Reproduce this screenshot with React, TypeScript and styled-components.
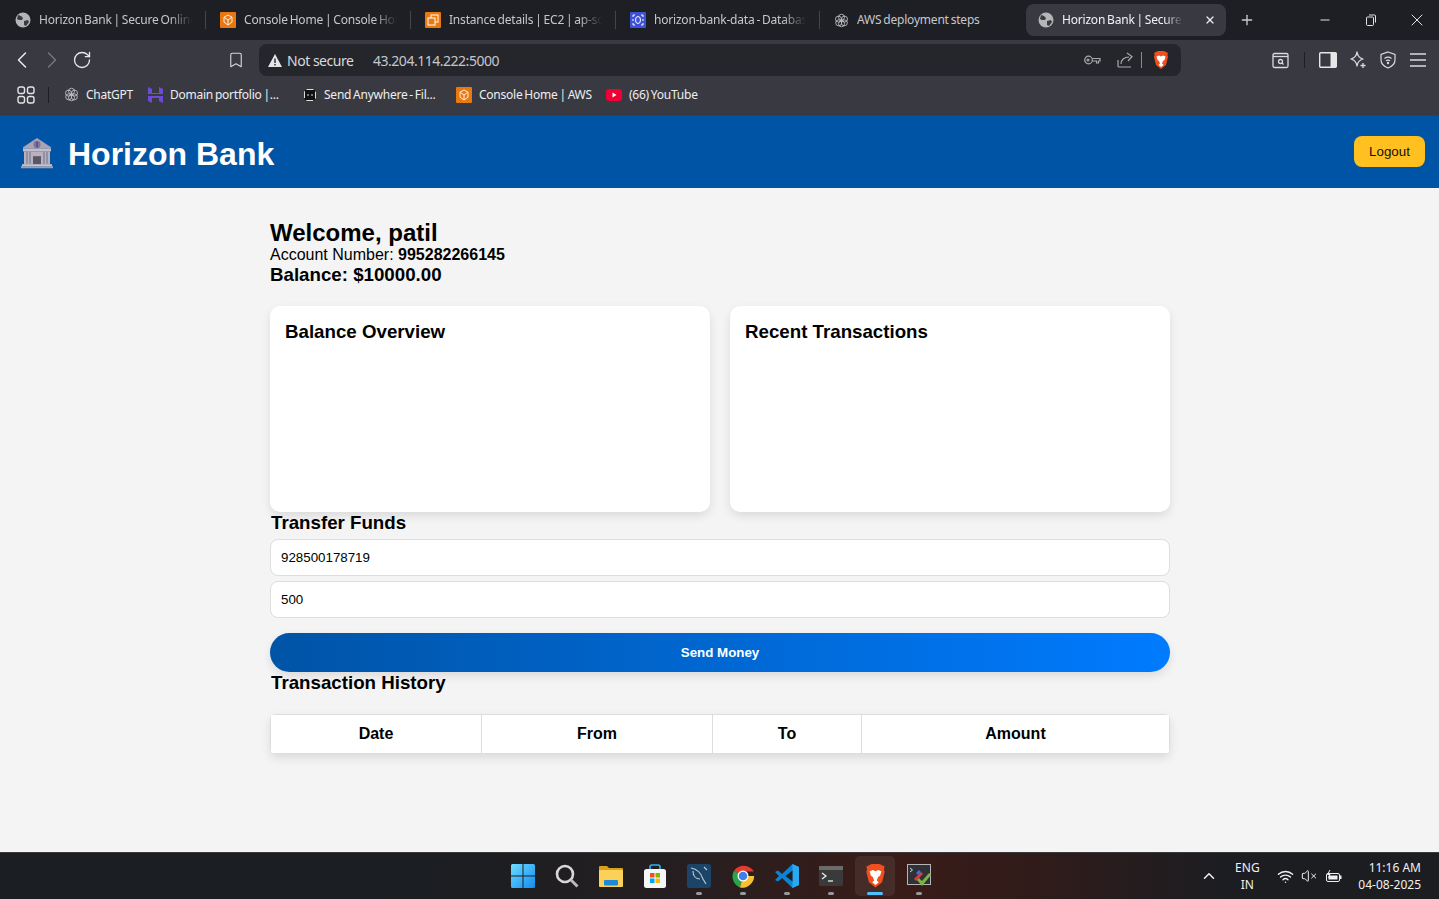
import React from "react";
import styled, { createGlobalStyle } from "styled-components";
import { ChevronLeft, ChevronRight, RotateCw, Bookmark, Minus, X, Plus, ChevronUp, Wifi, VolumeX } from "lucide-react";

const Global = createGlobalStyle`
  html, body { margin: 0; padding: 0; height: 100%; overflow: hidden; }
  body { font-family: "Liberation Sans", Arial, sans-serif; background: #f4f4f4; color: #000; }
  * { box-sizing: border-box; }
  h1, h2, h3, p { margin: 0; }
`;

const Screen = styled.div`width: 1439px; height: 899px; display: flex; flex-direction: column; overflow: hidden;`;

const TabStrip = styled.div`height: 40px; background: #1e1f25; display: flex; align-items: flex-start; font-family: "Noto Sans", sans-serif; font-size: 12px; color: #c6c7cc; padding-top: 4px;`;
const Tab = styled.div<{ $w: number; $active?: boolean; $sep?: boolean }>`
  width: ${p => p.$w}px; height: 32px; flex: none; display: flex; align-items: center; gap: 8px;
  padding: 0 0 0 ${p => (p.$active ? 12 : 15)}px; position: relative;
  ${p => p.$active ? "background:#393a41;border-radius:8px;color:#f2f2f4;" : ""}
  ${p => p.$sep ? "&::after{content:'';position:absolute;right:-1px;top:7px;height:18px;width:1px;background:#44454b;}" : ""}
`;
const TabLabel = styled.span<{ $fade?: boolean }>`
  flex: 1; min-width: 0; white-space: nowrap; overflow: hidden; letter-spacing: -0.2px; word-spacing: -1px; margin-right: 13px; padding-bottom: 1px;
  ${p => p.$fade ? "mask-image: linear-gradient(to right,#000 85%,transparent 100%);" : ""}
`;
const TabClose = styled.span`display: flex; margin-right: 10px; color: #eee;`;
const NewTab = styled.span`display: flex; width: 42px; height: 32px; align-items: center; justify-content: center; color: #c9cacf;`;
const WindowButtons = styled.div`margin-left: auto; margin-right: -1px; display: flex; height: 32px; align-items: center; color: #e4e4e6;`;
const WinBtn = styled.span`width: 46px; display: flex; justify-content: center; align-items: center;`;

const Toolbar = styled.div`height: 38px; background: #393a41; display: flex; align-items: center; padding: 2px 0 0 7px; position: relative; z-index: 1;`;
const NavBtn = styled.span<{ $dim?: boolean }>`width: 30px; display: flex; justify-content: center; color: ${p => (p.$dim ? "#74757b" : "#e8e8ea")};`;
const BookmarkBtn = styled.span`margin-left: 129px; width: 20px; display: flex; justify-content: center; color: #d5d6d9;`;
const UrlBar = styled.div`
  margin-left: 13px; width: 922px; height: 32px; background: #25262c; border-radius: 8px; display: flex; align-items: center; padding: 0 12px 0 9px;
  font-family: "Noto Sans", sans-serif; font-size: 14px; color: #d9d9dc; letter-spacing: -0.48px;
`;
const NotSecure = styled.span`margin-left: 5px; width: 86px;`;
const Address = styled.span`color: #c6c7cb; flex: 1;`;
const UrlIcon = styled.span`display: flex; color: #a9aaae; margin-right: 16px;`;
const UrlSep = styled.span`width: 1px; height: 16px; background: #8b8c90; margin: 0 11px 0 -9px;`;
const RightTools = styled.div`margin-left: 83px; display: flex; align-items: center; color: #d9dadc; gap: 0;`;
const ToolBtn = styled.span<{ $w?: number }>`width: ${p => p.$w ?? 30}px; display: flex; justify-content: center;`;
const ToolSep = styled.span`width: 1px; height: 16px; background: #1e1f25; margin: 0 8px;`;

const Bookmarks = styled.div`height: 37px; background: #393a41; display: flex; align-items: center; padding-left: 17px; font-family: "Noto Sans", sans-serif; font-size: 12px; color: #eeeef0; letter-spacing: -0.24px; word-spacing: -1px; padding-bottom: 4px;`;
const BmSep = styled.span`width: 1px; height: 16px; background: #1e1f25; margin: 0 15px 0 13px;`;
const BmItem = styled.span<{ $w: number }>`width: ${p => p.$w}px; flex: none; display: flex; align-items: center; gap: 7px; white-space: nowrap;`;

const Header = styled.header`height: 73px; background: #0054a6; display: flex; align-items: center; justify-content: space-between; padding: 0 14px 0 20px; border-top: 1px solid #0a4a8c;`;
const Brand = styled.h1`display: flex; align-items: center; gap: 14px; color: #fff; font-size: 32px; font-weight: 700; line-height: 37px; margin-top: 4px;`;
const BankSvg = styled.svg`margin-top: -2px;`;
const Logout = styled.button`
  width: 71px; height: 31px; margin-bottom: 2px; border: 0; border-radius: 8px; background: #ffc020; color: #111;
  font: 13.333px "Liberation Sans", sans-serif; padding: 0;
`;

const Main = styled.main`flex: 1; width: 900px; margin-left: 270px; padding-top: 31px; position: relative;`;
const Welcome = styled.h2`font-size: 24px; line-height: 27px; font-weight: 700;`;
const Account = styled.p`font-size: 16px; line-height: 18px; b { font-weight: 700; }`;
const Balance = styled.p`font-size: 18.72px; line-height: 22px; font-weight: 700; margin-bottom: 20px;`;
const Cards = styled.div`display: grid; grid-template-columns: 440px 440px; gap: 20px;`;
const Card = styled.section`height: 206px; background: #fff; border-radius: 10px; padding: 15px; box-shadow: 0 4px 10px rgba(0,0,0,.1);`;
const CardTitle = styled.h3`font-size: 18.72px; line-height: 22px; font-weight: 700;`;
const SectionTitle = styled.h3`font-size: 18.72px; line-height: 22px; font-weight: 700; padding-left: 1px;`;
const Field = styled.input`
  display: block; width: 100%; height: 37px; margin: 0 0 5px; padding: 0 10px; background: #fff; border: 1px solid #ddd; border-radius: 8px;
  font: 13.333px "Liberation Sans", sans-serif; color: #000; outline: none;
`;
const TransferTitle = styled(SectionTitle)`margin-bottom: 5px;`;
const SendBtn = styled.button`
  display: block; width: 100%; height: 39px; margin-top: 15px; border: 0; border-radius: 25px; color: #fff;
  background: linear-gradient(90deg, #0054a6, #007bff); font: 700 13.333px "Liberation Sans", sans-serif; box-shadow: 0 4px 10px rgba(0,0,0,.1);
`;
const HistoryTitle = styled(SectionTitle)``;
const Table = styled.table`
  width: 899px; margin-top: 20px; table-layout: fixed; border-collapse: collapse; background: #fff; border-radius: 5px; overflow: hidden; box-shadow: 0 4px 10px rgba(0,0,0,.1);
`;
const Th = styled.th<{ $w: number }>`
  width: ${p => p.$w}px; height: 39px; padding: 0; font-size: 16px; font-weight: 700; text-align: center; border: 1px solid #ddd;
`;

const Taskbar = styled.footer`
  height: 47px; display: flex; align-items: center; position: relative; border-top: 1px solid #3a3a3c;
  background: linear-gradient(90deg, #1b1e23 0%, #1c1e22 32%, #261e20 48%, #3a1c18 62%, #301b1a 72%, #1c1d22 85%, #1b1d21 100%);
  color: #f1f1f1; font-family: "Noto Sans", sans-serif; font-size: 12px;
`;
const TaskIcons = styled.div`display: flex; margin-left: 501px; width: 440px;`;
const TaskIcon = styled.span<{ $active?: boolean; $dot?: "run" | "active" }>`
  width: ${p => (p.$active ? 40 : 44)}px; ${p => (p.$active ? "margin: 0 2px;" : "")} height: 40px; display: flex; align-items: center; justify-content: center; position: relative; border-radius: 5px;
  ${p => p.$active ? "background: rgba(255,255,255,.07);" : ""}
  ${p => p.$dot ? `&::after{content:'';position:absolute;bottom:1px;left:50%;transform:translateX(-50%);height:3px;border-radius:2px;width:${p.$dot === "active" ? 16 : 6}px;background:${p.$dot === "active" ? "#4cc2ff" : "#9a9a9a"};}` : ""}
`;
const Tray = styled.div`margin-left: auto; display: flex; align-items: center; padding-right: 18px; line-height: 17px;`;
const TrayUp = styled.span`display: flex; margin-right: 14px;`;
const Lang = styled.span`text-align: center; width: 30px; margin-right: 12px; font-size: 12px;`;
const TrayIcon = styled.span<{ $w: number }>`width: ${p => p.$w}px; display: flex; justify-content: center;`;
const Clock = styled.span`text-align: right; margin-left: 13px; font-size: 12px;`;

const Globe = () => (
  <svg width="16" height="16" viewBox="0 0 16 16"><circle cx="8" cy="8" r="7.5" fill="#b4b5b9" /><path d="M3 3l3 1 2 2-1 2-3 0-2-1zM9 9l4-1 1 2-3 4-2-1z" fill="#3a3b40" /></svg>
);
const Aws = ({ s = 16 }: { s?: number }) => (
  <svg width={s} height={s} viewBox="0 0 16 16"><rect width="16" height="16" fill="#e8780f" rx="1" /><path d="M8 3l4 2.2v5L8 13l-4-2.800v-5zM4.300 5.400L8 8l3.700-2.600M8 8v4.800" fill="none" stroke="#fff" strokeWidth=".9" /></svg>
);
const Ec2 = () => (
  <svg width="16" height="16" viewBox="0 0 16 16"><rect width="16" height="16" fill="#e8780f" rx="1" /><rect x="6" y="3" width="7" height="7" fill="none" stroke="#fff" /><rect x="3" y="6" width="7" height="7" fill="#e8780f" stroke="#fff" /></svg>
);
const Rds = () => (
  <svg width="16" height="16" viewBox="0 0 16 16"><rect width="16" height="16" fill="#3f51d6" rx="1" /><ellipse cx="8" cy="8" rx="2.500" ry="3.500" fill="none" stroke="#fff" /><path d="M3 3h2M3 3v2M13 3h-2M13 3v2M3 13h2M3 13v-2M13 13h-2M13 13v-2M2 8h2M12 8h2" stroke="#fff" /></svg>
);
const Knot = () => (
  <svg width="15" height="15" viewBox="0 0 16 16" fill="none" stroke="#c4c4c8" strokeWidth=".9"><circle cx="8" cy="4.500" r="3.200" /><circle cx="11.200" cy="6.500" r="3.200" /><circle cx="11" cy="10.500" r="3.200" /><circle cx="8" cy="11.500" r="3.200" /><circle cx="5" cy="10.500" r="3.200" /><circle cx="4.800" cy="6.500" r="3.200" /></svg>
);
const Hostinger = () => (
  <svg width="15" height="16" viewBox="0 0 15 16" fill="#6d4bd8"><path d="M0 0l4 2v4l7 0V0l4 2v5H0zM0 9h15v7l-4-2v-3H4v5l-4-2z" /></svg>
);
const SendAny = () => (
  <svg width="14" height="14" viewBox="0 0 14 14"><rect x="1.500" y="1.500" width="11" height="11" rx="2" fill="#111" stroke="#ddd" strokeDasharray="7 3" /><path d="M5 6v2M9 6v2" stroke="#ddd" /></svg>
);
const YouTube = () => (
  <svg width="16" height="12" viewBox="0 0 16 12"><rect width="16" height="12" rx="3" fill="#f00034" /><path d="M6.500 3.500v5l4-2.500z" fill="#fff" /></svg>
);
const Alert = () => (
  <svg width="14" height="13" viewBox="0 0 14 13"><path d="M7 0l7 13H0z" fill="#e6e6e8" /><path d="M7 4.500v4.500M7 10v1.500" stroke="#25262c" strokeWidth="1.400" /></svg>
);
const HKey = () => (
  <svg width="17" height="10" viewBox="0 0 17 10" fill="none" stroke="#a9aaae" strokeWidth="1.200"><circle cx="4.500" cy="5" r="3.800" /><circle cx="4" cy="5" r="1" /><path d="M8.300 3.500H16V6h-1.500v2h-2V6H8.300" /></svg>
);
const ShareArrow = () => (
  <svg width="17" height="16" viewBox="0 0 17 16" fill="none" stroke="#a9aaae" strokeWidth="1.200"><path d="M1 8v6a1 1 0 0 0 1 1h12" /><path d="M4 12c0-4 3-7 8-7M10 1l5 3.500L11 9" /></svg>
);
const BraveLion = ({ s = 16 }: { s?: number }) => (
  <svg width={s} height={s * 1.15} viewBox="0 0 16 18.400"><path d="M3 1l2-1h6l2 1 2 1-.600 2 .600 2-2 8-5 4-5-4-2-8 .600-2L1 2z" fill="#f0501e" /><path d="M3.500 5.500l2.500-1 2 1 2-1 2.500 1-1 3.500-1.500 1-1 2.500 1.500 1.500-2.500 2-2.500-2 1.500-1.500-1-2.500-1.500-1z" fill="#fff" /></svg>
);
const Grid = () => (
  <svg width="18" height="18" viewBox="0 0 18 18" fill="none" stroke="#e4e4e6" strokeWidth="1.400"><rect x="1" y="1" width="6.500" height="6.500" rx="2" /><rect x="10.500" y="1" width="6.500" height="6.500" rx="2" /><rect x="1" y="10.500" width="6.500" height="6.500" rx="2" /><rect x="10.500" y="10.500" width="6.500" height="6.500" rx="2" /></svg>
);
const Restore = () => (
  <svg width="12" height="12" viewBox="0 0 12 12" fill="none" stroke="#e4e4e6"><rect x="1.500" y="3" width="7" height="8.500" rx="1" /><path d="M4 1h5.500a1 1 0 0 1 1 1v6.500" /></svg>
);
const TabSearch = () => (
  <svg width="17" height="17" viewBox="0 0 17 17" fill="none" stroke="#d9dadc" strokeWidth="1.300"><rect x="1" y="1.500" width="15" height="14" rx="1.500" /><path d="M1 4.500h15" /><circle cx="8.500" cy="9.500" r="2" /><path d="M10 11l1.500 1.500" /></svg>
);
const Sidebar = () => (
  <svg width="18" height="16" viewBox="0 0 18 16"><rect x=".7" y=".7" width="16.600" height="14.600" fill="none" stroke="#e6e6e8" strokeWidth="1.400" rx="1" /><rect x="11.500" y="1" width="6" height="14" fill="#e6e6e8" /></svg>
);
const Leo = () => (
  <svg width="18" height="18" viewBox="0 0 18 18" fill="none" stroke="#d9dadc" strokeWidth="1.300"><path d="M8 1c.5 4 2.500 6 6 7-3.500 1-5.500 3-6 7-.5-4-2.500-6-6-7 3.500-1 5.500-3 6-7z" strokeLinejoin="round" /><path d="M14 12v5M11.500 14.500h5" /></svg>
);
const VpnShield = () => (
  <svg width="16" height="18" viewBox="0 0 16 18" fill="none" stroke="#d9dadc" strokeWidth="1.200"><path d="M8 1l7 2.500V9c0 4-3 6.500-7 8-4-1.500-7-4-7-8V3.500z" /><path d="M4.500 7.500c2-1.500 5-1.500 7 0M6 9.800c1.200-.8 2.800-.8 4 0" /><circle cx="8" cy="12" r=".6" fill="#d9dadc" /></svg>
);
const Hamburger = () => (
  <svg width="16" height="14" viewBox="0 0 16 14" stroke="#d9dadc" strokeWidth="1.500"><path d="M0 1h16M0 7h16M0 13h16" /></svg>
);
const BankEmoji = () => (
  <BankSvg width="34" height="32" viewBox="0 0 34 30" preserveAspectRatio="none">
    <path d="M17 1L31 9.500V11H3V9.500z" fill="#a9a3b4" />
    <circle cx="17" cy="7" r="3.500" fill="#7e7790" />
    <path d="M17 4.500v5" stroke="#5d3fa8" strokeWidth="1.500" />
    <rect x="3" y="11" width="28" height="2.500" fill="#c3bec9" />
    <rect x="4" y="13.500" width="26" height="12" fill="#b7b2be" />
    <path d="M7 14v11M10 14v11M24 14v11M27 14v11" stroke="#8b8597" strokeWidth="1.500" />
    <rect x="13" y="18" width="8" height="7.500" fill="#5b5564" />
    <rect x="2" y="25.500" width="30" height="1.800" fill="#c9c5ce" />
    <rect x="1" y="27.300" width="32" height="2" fill="#a39eaa" />
  </BankSvg>
);
const WinLogo = () => (
  <svg width="24" height="24" viewBox="0 0 24 24"><defs><linearGradient id="wg" x1="0" y1="0" x2="1" y2="1"><stop stopColor="#6fdcff" /><stop offset="1" stopColor="#0f8cf0" /></linearGradient></defs><path d="M0 1.500a1.500 1.500 0 0 1 1.500-1.500H11.500v11.500H0zM12.500 0h10A1.500 1.500 0 0 1 24 1.500V11.500H12.500zM0 12.500h11.500V24H1.500A1.500 1.500 0 0 1 0 22.500zM12.500 12.500H24v10a1.500 1.500 0 0 1-1.500 1.500h-10z" fill="url(#wg)" /></svg>
);
const SearchGlass = () => (
  <svg width="24" height="24" viewBox="0 0 24 24" fill="none"><circle cx="10" cy="10" r="8" stroke="#d8d8d8" strokeWidth="2.600" /><path d="M16 16l6.500 6.500" stroke="#b9b9b9" strokeWidth="3" /></svg>
);
const Folder = () => (
  <svg width="24" height="22" viewBox="0 0 24 22"><path d="M0 2a1 1 0 0 1 1-1h7l2 2h13a1 1 0 0 1 1 1v3H0z" fill="#d9a21b" /><rect y="5" width="24" height="17" rx="1" fill="#fbd257" /><rect x="5" y="15" width="14" height="5.500" rx="1" fill="#1e88d8" /></svg>
);
const Store = () => (
  <svg width="24" height="24" viewBox="0 0 24 24"><path d="M7 6V3a2 2 0 0 1 2-2h6a2 2 0 0 1 2 2v3" fill="none" stroke="#29b6f6" strokeWidth="1.600" /><rect x="1" y="5" width="22" height="19" rx="2.500" fill="#f6f6f6" /><rect x="7" y="9" width="4.500" height="4.500" fill="#f25022" /><rect x="12.500" y="9" width="4.500" height="4.500" fill="#7fba00" /><rect x="7" y="14.500" width="4.500" height="4.500" fill="#00a4ef" /><rect x="12.500" y="14.500" width="4.500" height="4.500" fill="#ffb900" /></svg>
);
const Workbench = () => (
  <svg width="24" height="24" viewBox="0 0 24 24"><rect width="24" height="24" rx="2.500" fill="#1c4468" /><path d="M4 4c6 1 10 5 12 11l3 5M6 7c0 5 3 8 7 8M17 3l3 3" fill="none" stroke="#b8c8d4" strokeWidth="1.200" /></svg>
);
const ChromeLogo = () => (
  <svg width="24" height="24" viewBox="0 0 24 24"><path d="M12 12L3 6.800A12 12 0 0 1 23 7.500H12z" fill="#e33b2e" /><path d="M12 12L3 6.800A12 12 0 0 0 9 23.600z" fill="#2ba24c" /><path d="M12 12h11.200A12 12 0 0 1 9 23.600z" fill="#fbc02d" /><circle cx="12" cy="12" r="5.500" fill="#fff" /><circle cx="12" cy="12" r="4.300" fill="#3f7fe8" /></svg>
);
const VsCode = () => (
  <svg width="24" height="24" viewBox="0 0 24 24"><path d="M17.500 0L24 3v18l-6.500 3L7 14l-4 3.500L0 16l4-4-4-4 3-1.500L7 10z" fill="#0a84d6" /><path d="M17.500 0L24 3v18l-6.500 3z" fill="#2aa8f0" /><path d="M17.500 6.500L10.500 12l7 5.500z" fill="#1c1e22" /></svg>
);
const Terminal = () => (
  <svg width="24" height="20" viewBox="0 0 24 20"><rect width="24" height="20" rx="1.500" fill="#3a3a3a" /><rect width="24" height="4" fill="#6b6b6b" /><path d="M3 7l4 3-4 3" fill="none" stroke="#eee" strokeWidth="1.300" /><path d="M9 15h5" stroke="#eee" strokeWidth="1.300" /></svg>
);
const Tool = () => (
  <svg width="24" height="24" viewBox="0 0 24 24"><rect x=".5" y=".5" width="23" height="20" fill="#2f3136" stroke="#b5b5b5" /><path d="M3 4l2.500 2L3 8" fill="none" stroke="#ddd" /><path d="M7 15l7-7 2 2-7 7z" fill="#e53935" /><path d="M12 14l3 3 7-8 2 2-9 11-5-6z" fill="#7cb342" /><path d="M9 9l3-3 2 2-3 3z" fill="#3f6fd8" /></svg>
);
const Battery = () => (
  <svg width="17" height="13" viewBox="0 0 17 13"><rect x="1.500" y="3.500" width="13" height="8" rx="1.500" fill="#1c1d22" stroke="#eee" /><rect x="3.500" y="5.500" width="9" height="4" fill="#eee" /><rect x="15" y="5.500" width="1.500" height="3.500" fill="#eee" /><path d="M5 0L2.500 4.500H5L3.500 7.500" fill="none" stroke="#eee" /></svg>
);

const tabs = [
  { w: 205, icon: <Globe />, label: "Horizon Bank | Secure Online Banking" },
  { w: 205, icon: <Aws />, label: "Console Home | Console Home" },
  { w: 205, icon: <Ec2 />, label: "Instance details | EC2 | ap-south-1" },
  { w: 204, icon: <Rds />, label: "horizon-bank-data - Databases" },
];

export default function App() {
  return (
    <Screen>
      <Global />
      <TabStrip>
        {tabs.map(t => (
          <Tab key={t.label} $w={t.w} $sep>
            {t.icon}
            <TabLabel $fade>{t.label}</TabLabel>
          </Tab>
        ))}
        <Tab $w={207}><Knot /><TabLabel>AWS deployment steps</TabLabel></Tab>
        <Tab $w={200} $active>
          <Globe />
          <TabLabel $fade>Horizon Bank | Secure Online Banking</TabLabel>
          <TabClose><X size={12} strokeWidth={2.5} /></TabClose>
        </Tab>
        <NewTab><Plus size={16} /></NewTab>
        <WindowButtons>
          <WinBtn><Minus size={14} /></WinBtn>
          <WinBtn><Restore /></WinBtn>
          <WinBtn><X size={20} strokeWidth={1.2} /></WinBtn>
        </WindowButtons>
      </TabStrip>

      <Toolbar>
        <NavBtn><ChevronLeft size={28} strokeWidth={1.3} /></NavBtn>
        <NavBtn $dim><ChevronRight size={28} strokeWidth={1.3} /></NavBtn>
        <NavBtn><RotateCw size={20} strokeWidth={1.6} /></NavBtn>
        <BookmarkBtn><Bookmark size={18} strokeWidth={1.5} /></BookmarkBtn>
        <UrlBar>
          <Alert />
          <NotSecure>Not secure</NotSecure>
          <Address>43.204.114.222:5000</Address>
          <UrlIcon><HKey /></UrlIcon>
          <UrlIcon><ShareArrow /></UrlIcon>
          <UrlSep />
          <BraveLion />
        </UrlBar>
        <RightTools>
          <ToolBtn $w={32}><TabSearch /></ToolBtn>
          <ToolSep />
          <ToolBtn><Sidebar /></ToolBtn>
          <ToolBtn><Leo /></ToolBtn>
          <ToolBtn><VpnShield /></ToolBtn>
          <ToolBtn><Hamburger /></ToolBtn>
        </RightTools>
      </Toolbar>

      <Bookmarks>
        <Grid />
        <BmSep />
        <BmItem $w={84}><Knot /><span>ChatGPT</span></BmItem>
        <BmItem $w={155}><Hostinger /><span>Domain portfolio |...</span></BmItem>
        <BmItem $w={153}><SendAny /><span>Send Anywhere - Fil...</span></BmItem>
        <BmItem $w={150}><Aws /><span>Console Home | AWS</span></BmItem>
        <BmItem $w={110}><YouTube /><span>(66) YouTube</span></BmItem>
      </Bookmarks>

      <Header>
        <Brand><BankEmoji />Horizon Bank</Brand>
        <Logout>Logout</Logout>
      </Header>

      <Main>
        <Welcome>Welcome, patil</Welcome>
        <Account>Account Number: <b>995282266145</b></Account>
        <Balance>Balance: $10000.00</Balance>
        <Cards>
          <Card><CardTitle>Balance Overview</CardTitle></Card>
          <Card><CardTitle>Recent Transactions</CardTitle></Card>
        </Cards>
        <TransferTitle>Transfer Funds</TransferTitle>
        <Field defaultValue="928500178719" />
        <Field defaultValue="500" />
        <SendBtn>Send Money</SendBtn>
        <HistoryTitle>Transaction History</HistoryTitle>
        <Table>
          <thead>
            <tr>
              <Th $w={211}>Date</Th>
              <Th $w={231}>From</Th>
              <Th $w={149}>To</Th>
              <Th $w={308}>Amount</Th>
            </tr>
          </thead>
        </Table>
      </Main>

      <Taskbar>
        <TaskIcons>
          <TaskIcon><WinLogo /></TaskIcon>
          <TaskIcon><SearchGlass /></TaskIcon>
          <TaskIcon><Folder /></TaskIcon>
          <TaskIcon><Store /></TaskIcon>
          <TaskIcon $dot="run"><Workbench /></TaskIcon>
          <TaskIcon $dot="run"><ChromeLogo /></TaskIcon>
          <TaskIcon $dot="run"><VsCode /></TaskIcon>
          <TaskIcon $dot="run"><Terminal /></TaskIcon>
          <TaskIcon $active $dot="active"><BraveLion s={21} /></TaskIcon>
          <TaskIcon $dot="run"><Tool /></TaskIcon>
        </TaskIcons>
        <Tray>
          <TrayUp><ChevronUp size={18} /></TrayUp>
          <Lang>ENG<br />IN</Lang>
          <TrayIcon $w={23}><Wifi size={17} /></TrayIcon>
          <TrayIcon $w={24}><VolumeX size={16} strokeWidth={1.5} /></TrayIcon>
          <TrayIcon $w={24}><Battery /></TrayIcon>
          <Clock>11:16 AM<br />04-08-2025</Clock>
        </Tray>
      </Taskbar>
    </Screen>
  );
}
